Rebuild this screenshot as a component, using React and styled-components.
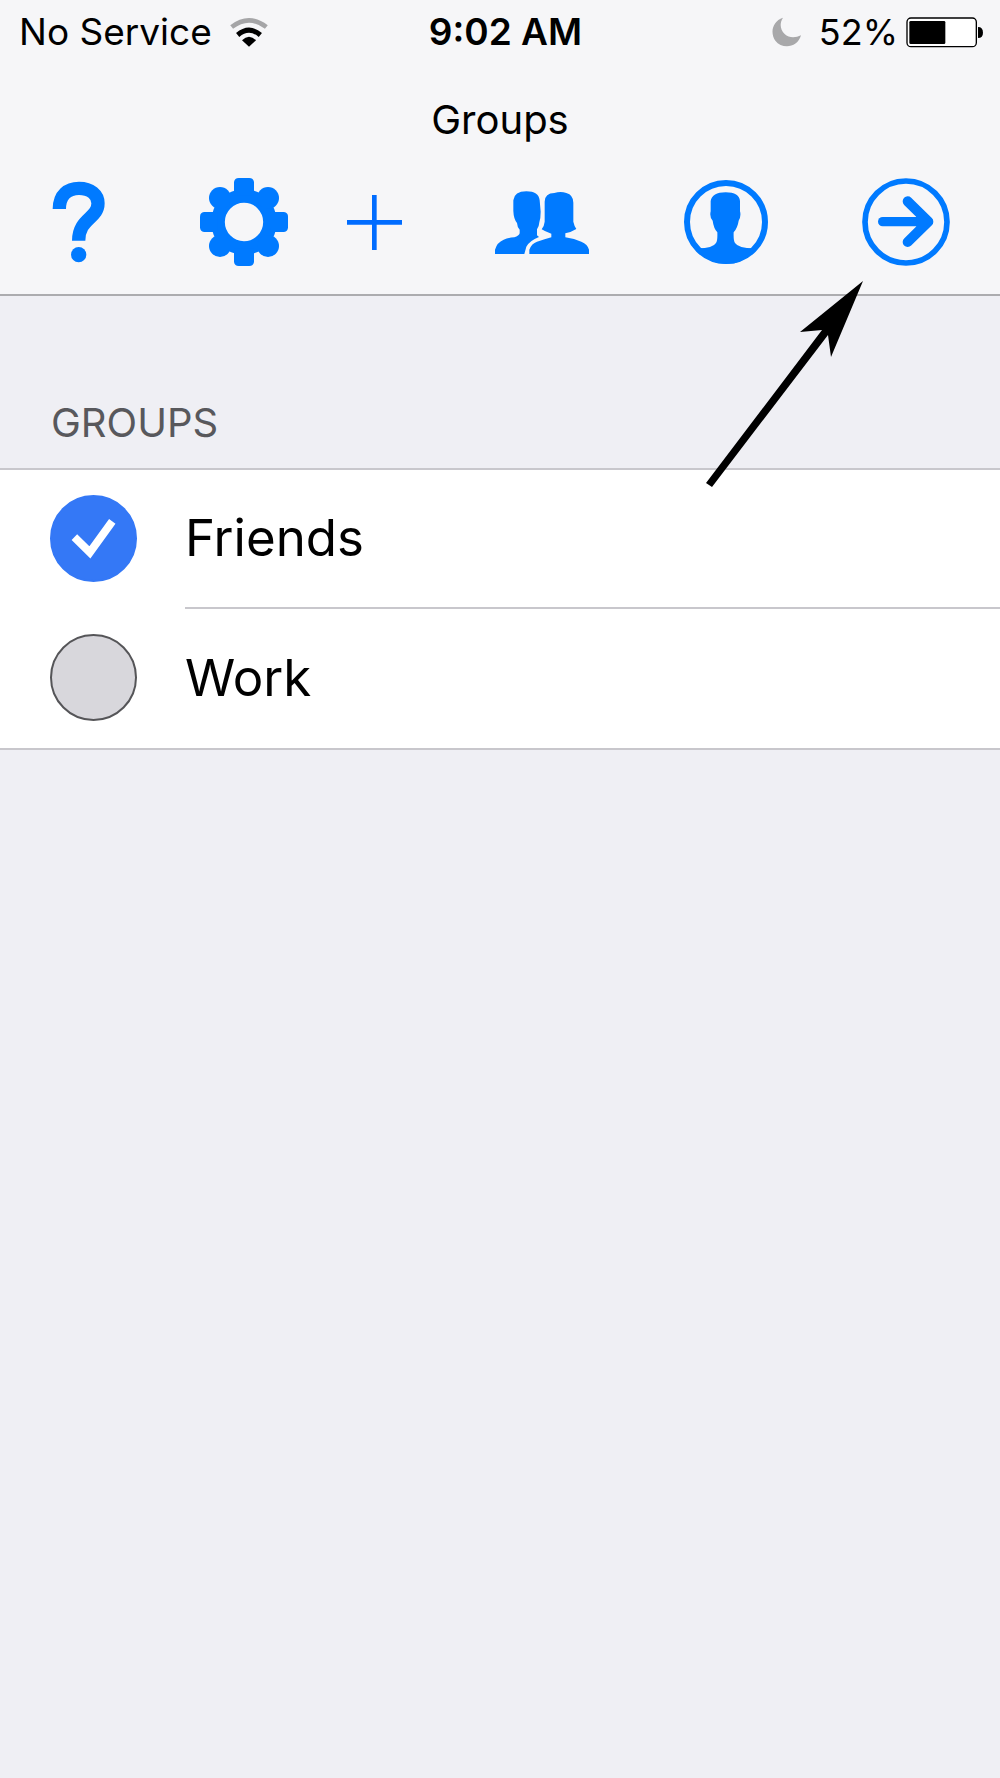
import { useState } from "react";
import styled, { createGlobalStyle } from "styled-components";

const batteryLevel = 52;

const App = () => {
  const [groups, setGroups] = useState([
    { id: "friends", name: "Friends", checked: true },
    { id: "work", name: "Work", checked: false },
  ]);

  const handleToggle = id => {
    setGroups(prev =>
      prev.map(el => (el.id === id ? { ...el, checked: !el.checked } : el)),
    );
  };

  return (
    <>
      <GlobalStyle />
      <Screen>
        <Header>
          <StatusBar>
            <StatusSide>
              No Service
              <WifiIcon />
            </StatusSide>
            <Clock>9:02 AM</Clock>
            <StatusSide $end>
              <MoonIcon />
              <BatteryStatus>
                {batteryLevel}%
                <BatteryIcon level={batteryLevel} />
              </BatteryStatus>
            </StatusSide>
          </StatusBar>
          <Title>Groups</Title>
          <Toolbar>
            <ToolButton aria-label="Help">
              <HelpIcon />
            </ToolButton>
            <ToolGroup>
              <ToolButton aria-label="Settings">
                <GearIcon />
              </ToolButton>
              <ToolButton aria-label="Add">
                <PlusIcon />
              </ToolButton>
            </ToolGroup>
            <ToolButton aria-label="Groups">
              <PeopleIcon />
            </ToolButton>
            <ToolButton aria-label="Contact">
              <PersonIcon />
            </ToolButton>
            <ToolButton aria-label="Next">
              <NextIcon />
            </ToolButton>
          </Toolbar>
        </Header>
        <main>
          <SectionTitle>GROUPS</SectionTitle>
          <GroupList>
            {groups.map(el => (
              <GroupRow key={el.id}>
                <CheckWrap>
                  <Checkbox
                    type="checkbox"
                    id={el.id}
                    checked={el.checked}
                    onChange={() => handleToggle(el.id)}
                  />
                  {el.checked && <CheckIcon />}
                </CheckWrap>
                <GroupLabel htmlFor={el.id}>{el.name}</GroupLabel>
              </GroupRow>
            ))}
          </GroupList>
        </main>
        <Pointer />
      </Screen>
    </>
  );
};

const WifiIcon = () => (
  <svg width="38" height="30" viewBox="686 48 114 90" fill="none">
    <path d="M691 78 Q743 38 795 78" stroke="#a5a5a7" strokeWidth="14" />
    <path d="M709 102 Q743 73 777 102" stroke="#000" strokeWidth="15" />
    <path d="M722 118 Q743 96 764 118 L743 137Z" fill="#000" />
  </svg>
);

const MoonIcon = () => (
  <svg width="29" height="30" viewBox="94 49 87 90">
    <path
      d="M127 51 C94 62 88 97 104 120 C124 147 171 142 181 104 C165 112 145 113 132 100 C117 86 117 66 127 51Z"
      fill="#a8a8aa"
    />
  </svg>
);

const BatteryIcon = ({ level }) => (
  <svg width="77" height="31" viewBox="498 50 231 93">
    <rect
      x="501"
      y="53"
      width="208"
      height="86"
      rx="12"
      fill="#fff"
      stroke="#000"
      strokeWidth="4"
    />
    <rect x="508" y="62" width={level * 2 + 4} height="69" rx="4" />
    <path d="M714 80 Q729 80 729 97 Q729 113 714 113Z" />
  </svg>
);

const HelpIcon = () => (
  <svg width="54" height="82" viewBox="65 64 162 246" fill="none">
    <path
      d="M87 148 C87 105 113 86 146 86 C181 86 203 106 203 131 C203 177 145 176 145 243"
      stroke="currentColor"
      strokeWidth="40"
    />
    <circle cx="145" cy="285" r="23" fill="currentColor" />
  </svg>
);

const GearIcon = () => (
  <svg width="88" height="88" viewBox="-132 -132 264 264" fill="currentColor">
    <circle r="78" fill="none" stroke="currentColor" strokeWidth="41" />
    {[0, 90, 180, 270].map(angle => (
      <g key={angle} transform={`rotate(${angle})`}>
        <path d="M-30 -80 V-120 Q-28 -132 -16 -132 H16 Q28 -132 30 -120 V-80Z" />
        <circle cx="72" cy="-72" r="33" />
      </g>
    ))}
  </svg>
);

const PlusIcon = () => (
  <svg width="55" height="55" viewBox="0 0 165 165">
    <path d="M82 0 V165 M0 82 H165" stroke="#006cff" strokeWidth="14" />
  </svg>
);

const PeopleIcon = () => (
  <svg width="94" height="63" viewBox="530 92 282 189" fill="currentColor">
    <path d="M530 281 V268 Q536 246 556 238 Q570 232 588 231 Q602 227 604 219 V208 Q597 202 596 188 Q586 176 585 152 V120 Q588 93 624 93 Q661 93 664 120 L667 154 Q667 174 663 186 Q662 200 656 207 V225 L662 230 Q634 241 624 259 Q621 270 618 281Z" />
    <path d="M633 281 V268 Q640 249 656 244 Q680 236 699 231 V220 Q680 214 670 207 Q678 196 679 184 V124 Q680 98 708 98 Q727 92 744 98 Q765 104 765 127 V184 Q768 198 774 206 Q758 216 741 219 V231 Q769 235 789 244 Q808 252 812 268 V281Z" />
  </svg>
);

const PersonIcon = () => (
  <svg width="86" height="86" viewBox="71 58 258 258" fill="currentColor">
    <circle
      cx="200"
      cy="187"
      r="117"
      fill="none"
      stroke="currentColor"
      strokeWidth="18"
    />
    <path d="M111 266 Q160 267 170 250 Q175 243 174 218 Q163 206 160 183 Q150 172 154 155 V124 Q158 98 199 98 Q240 98 242 124 V155 Q246 169 238 183 Q235 204 223 218 Q222 243 227 250 Q238 267 289 266 Q251 316 200 312 Q149 315 111 266Z" />
  </svg>
);

const NextIcon = () => (
  <svg width="88" height="88" viewBox="606 55 264 264" fill="none">
    <g stroke="currentColor" strokeLinecap="round" strokeLinejoin="round">
      <circle cx="738" cy="187" r="123" strokeWidth="17" />
      <path d="M668 186 H790" strokeWidth="28" />
      <path d="M743 125 L805 186 L743 247" strokeWidth="30" />
      <path d="M780 174 L792 186 L780 198Z" strokeWidth="22" />
    </g>
  </svg>
);

const CheckIcon = () => (
  <svg width="87" height="87" viewBox="150 338 264 264" fill="none">
    <path d="M224 466 L271 512 L339 418" stroke="#fff" strokeWidth="24" />
  </svg>
);

const Pointer = () => (
  <PointerSvg width="160" height="208" viewBox="704 281 160 208">
    <path d="M863 281 L800 332 L822 330 L706 483 L712 487 L828 335 L831 357Z" />
  </PointerSvg>
);

const GlobalStyle = createGlobalStyle`
  * {
    box-sizing: border-box;
  }

  body {
    margin: 0;
    background: #efeff4;
    color: #000;
    font-family: Inter, "Liberation Sans", sans-serif;
  }

  svg {
    display: block;
    flex-shrink: 0;
  }
`;

const Screen = styled.div`
  position: relative;
  min-height: 100vh;
  background: #efeff4;
`;

const Header = styled.header`
  background: #f6f6f8;
  border-bottom: 2px solid #acacaf;
`;

const StatusBar = styled.div`
  display: flex;
  align-items: center;
  height: 64px;
  padding: 0 8px 0 19px;
  font-size: 37px;
  line-height: 44px;
  white-space: nowrap;
`;

const StatusSide = styled.div`
  flex: 1 1 0;
  display: flex;
  align-items: center;
  justify-content: ${({ $end }) => ($end ? "flex-end" : "flex-start")};
  gap: 18px;
  padding-right: 9px;
`;

const BatteryStatus = styled.div`
  display: flex;
  align-items: center;
  gap: 8px;
  font-size: 36px;
`;

const Clock = styled.time`
  font-weight: 600;
`;

const Title = styled.h1`
  margin: 0;
  padding: 32px 0 8px;
  font-size: 40px;
  font-weight: 400;
  line-height: 48px;
  text-align: center;
`;

const Toolbar = styled.nav`
  display: flex;
  align-items: center;
  justify-content: space-between;
  height: 142px;
  padding: 0 50px 2px 52px;
`;

const ToolGroup = styled.div`
  display: flex;
  align-items: center;
  gap: 59px;
`;

const ToolButton = styled.button`
  padding: 0;
  border: none;
  background: none;
  color: #007aff;
  cursor: pointer;
`;

const SectionTitle = styled.h2`
  margin: 0;
  padding: 103px 51px 21px;
  color: #58585c;
  font-size: 40px;
  font-weight: 400;
  line-height: 48px;
`;

const GroupRow = styled.li`
  display: grid;
  grid-template-columns: 87px 1fr;
  column-gap: 48px;
  align-items: center;
  height: 139px;
  padding-left: 50px;
`;

const GroupList = styled.ul`
  margin: 0;
  padding: 0;
  list-style: none;
  background: #fff;
  border-top: 2px solid #c8c7cc;
  border-bottom: 2px solid #c8c7cc;
`;

const GroupLabel = styled.label`
  display: flex;
  align-items: center;
  height: 100%;
  padding-bottom: 2px;
  font-size: 51px;
  line-height: 64px;

  ${GroupRow}:not(:last-child) & {
    border-bottom: 2px solid #c8c7cc;
  }
`;

const CheckWrap = styled.div`
  display: grid;
  padding-bottom: 3px;

  > * {
    grid-area: 1 / 1;
  }

  svg {
    pointer-events: none;
  }
`;

const Checkbox = styled.input`
  appearance: none;
  width: 87px;
  height: 87px;
  margin: 0;
  border: 2px solid #555558;
  border-radius: 50%;
  background: #d8d7dc;
  cursor: pointer;

  &:checked {
    border-color: #3478f6;
    background: #3478f6;
  }
`;

const PointerSvg = styled.svg`
  position: absolute;
  top: 281px;
  right: 136px;
  pointer-events: none;
`;

export default App;
